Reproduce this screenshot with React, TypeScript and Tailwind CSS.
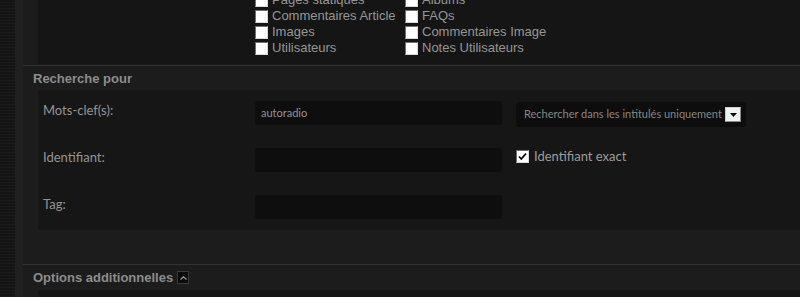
const leftCol = ["Pages statiques", "Commentaires Article", "Images", "Utilisateurs"];
const rightCol = ["Albums", "FAQs", "Commentaires Image", "Notes Utilisateurs"];

const Box = ({ checked = false }: { checked?: boolean }) => (
  <span className="flex h-[13px] w-[13px] shrink-0 items-center justify-center border border-t-[#6f6f6f] border-l-[#6f6f6f] border-r-[#d8d8d8] border-b-[#d8d8d8] bg-white">
    {checked && (
      <svg width="9" height="9" viewBox="0 0 9 9">
        <path d="M1 4.5 L3.3 7 L8 1.5" fill="none" stroke="#000" strokeWidth="1.8" />
      </svg>
    )}
  </span>
);

const CheckList = ({ items }: { items: string[] }) => (
  <div className="flex w-[150px] flex-col">
    {items.map((t) => (
      <label key={t} className="flex h-[16px] items-center gap-[4px] text-[13px] leading-[16px] text-[#959595]">
        <Box />
        <span>{t}</span>
      </label>
    ))}
  </div>
);

const Field = () => <div className="h-[24px] w-[247px] rounded-[3px] bg-[#0e0e0e]" />;

export default function App() {
  return (
    <div className="flex h-[297px] w-[800px] overflow-hidden font-['Liberation_Sans',Arial,sans-serif]">
      <div className="w-[15px] bg-[#151515] bg-[repeating-linear-gradient(0deg,#1b1b1b_0px,#1b1b1b_1px,#141414_1px,#141414_3px)]" />
      <div className="w-[8px] bg-[#202020]" />
      <div className="flex flex-1 flex-col bg-[#1c1c1c]">
        {/* types list */}
        <div className="ml-[15px] h-[64px] shrink-0 overflow-hidden bg-[#151515]">
          <div className="-mt-[8px] ml-[217px] flex">
            <CheckList items={leftCol} />
            <CheckList items={rightCol} />
          </div>
        </div>

        <div className="mt-[1px] h-[25px] shrink-0 border-t border-[#313131] pl-[10px] text-[13px] font-bold leading-[25px] text-[#8c8c8c]">
          Recherche pour
        </div>

        <div className="ml-[15px] flex h-[140px] shrink-0 flex-col gap-[23px] bg-[#161616] py-[11px] pl-[5px] font-['Lato','Open_Sans',sans-serif]">
          <div className="flex h-[24px] items-start">
            <div className="w-[212px] text-[13px] leading-[18px] text-[#949494]">Mots-clef(s):</div>
            <div className="flex h-[24px] w-[247px] items-center rounded-[3px] bg-[#0e0e0e] pl-[6px] text-[11px] text-[#929292]">
              autoradio
            </div>
            <div className="ml-[14px] mt-[1px] flex h-[25px] w-[230px] items-center justify-between rounded-[3px] bg-[#0d0d0d] pl-[8px] pr-[5px] text-[11px] text-[#858585]">
              <span>Rechercher dans les intitulés uniquement</span>
              <span className="flex h-[15px] w-[16px] items-center justify-center border border-[#cfcfcf] border-b-[#8a8a8a] border-r-[#8a8a8a] bg-[#f2f2f2]">
                <svg width="7" height="4" viewBox="0 0 7 4">
                  <path d="M0 0 H7 L3.5 4 Z" fill="#000" />
                </svg>
              </span>
            </div>
          </div>

          <div className="flex h-[24px] items-start">
            <div className="w-[212px] text-[13px] leading-[18px] text-[#949494]">Identifiant:</div>
            <Field />
            <label className="ml-[14px] mt-[1px] flex items-center gap-[5px] text-[13px] leading-[14px] text-[#9c9c9c]">
              <Box checked />
              <span>Identifiant exact</span>
            </label>
          </div>

          <div className="flex h-[24px] items-start">
            <div className="w-[212px] text-[13px] leading-[18px] text-[#949494]">Tag:</div>
            <Field />
          </div>
        </div>

        <div className="h-[34px] shrink-0" />

        <div className="flex h-[26px] shrink-0 items-center gap-[4px] border-t border-[#313131] pl-[10px] text-[13px] font-bold text-[#8c8c8c]">
          <span>Options additionnelles</span>
          <span className="flex h-[13px] w-[12px] items-center justify-center border border-[#3a3a3a] bg-[#0b0b0b]">
            <svg width="7" height="4" viewBox="0 0 7 4">
              <path d="M0.5 3.5 L3.5 0.8 L6.5 3.5" fill="none" stroke="#9a9a9a" strokeWidth="1.2" />
            </svg>
          </span>
        </div>

        <div className="ml-[15px] flex-1 bg-[#161616]" />
      </div>
    </div>
  );
}
